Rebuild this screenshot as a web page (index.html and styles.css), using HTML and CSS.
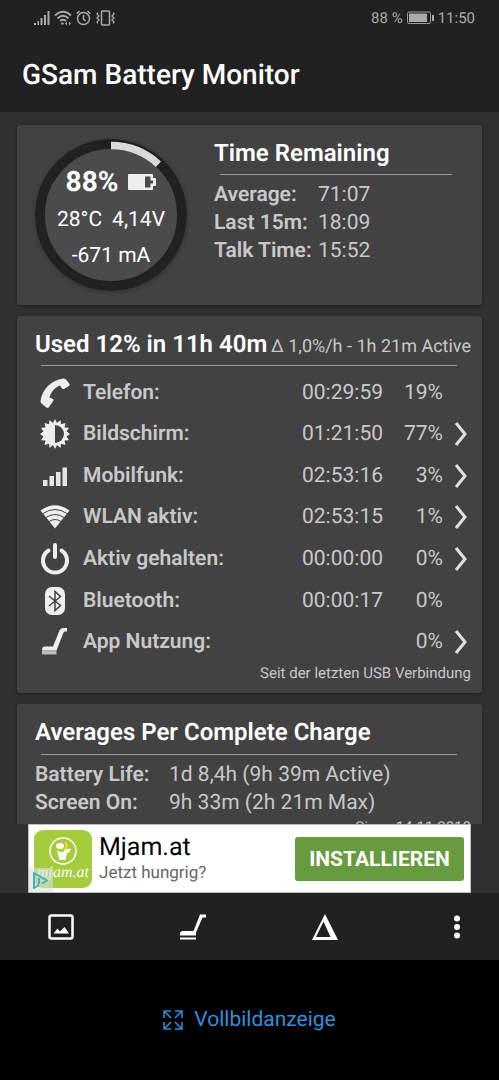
FILE: index.html
```html
<!DOCTYPE html>
<html lang="de">
<head>
  <meta charset="UTF-8">
  <meta name="viewport" content="width=device-width, initial-scale=1.0">
  <title>GSam Battery Monitor</title>
  <link rel="stylesheet" href="styles.css">
</head>
<body>
  <header class="top">
    <div class="statusbar">
      <div class="status-left">
        <svg width="16" height="16" viewBox="0 0 16 16" fill="#aaa"><path d="M0 13h2v2H0zM3.500 11h1.500v4H3.500zM6.500 8h2v7h-2zM10 5h2v10h-2zM13.500 1h2v14h-2z"/></svg>
        <svg width="18" height="16" viewBox="0 0 18 16" fill="none" stroke="#aaa" stroke-width="1.800"><path d="M1 5.500Q9-2 17 5.500M3.500 8.500Q9 3 14.500 8.500M6 11q3-2.500 6 0"/><circle cx="8.500" cy="13.500" r="1.200" fill="#aaa" stroke="none"/><path d="M13 11.500l-2 2 2 2zM15 11.500l2 2-2 2z" fill="#aaa" stroke="none"/></svg>
        <svg width="15" height="16" viewBox="0 0 15 16" fill="none" stroke="#aaa" stroke-width="1.500"><circle cx="7.500" cy="8.500" r="6"/><path d="M7.500 5v4l2 2M.8 3.800L3.500 1M14.200 3.800L11.500 1"/></svg>
        <svg class="vibrate" width="19" height="16" viewBox="0 0 19 16" fill="none" stroke="#aaa" stroke-width="1.500"><rect x="5.500" y="1" width="8" height="14" rx="1"/><path d="M2 2.500l-1 1.500 2 2-2 2 2 2-2 2 1 1.500M17 2.500l1 1.500-2 2 2 2-2 2 2 2-1 1.500" stroke-width="1.300"/></svg>
      </div>
      <div class="status-right">
        <span>88 %</span>
        <svg width="27" height="14" viewBox="0 0 27 14"><rect x=".5" y="1" width="23" height="11.500" rx="1.500" fill="none" stroke="#999"/><rect x="2" y="2.500" width="18" height="8.500" fill="#aaa"/><rect x="25" y="4" width="2" height="6" fill="#aaa"/></svg>
        <span>11:50</span>
      </div>
    </div>
    <h1>GSam Battery Monitor</h1>
  </header>

  <main>
    <section class="card remaining">
      <div class="gauge">
        <svg class="ring" viewBox="0 0 152 152">
          <circle cx="76" cy="76" r="71" fill="#4b4b4b" stroke="#212121" stroke-width="10"/>
          <path d="M76 6.500A69.500 69.500 0 0 1 123.400 25.200" fill="none" stroke="#dadada" stroke-width="7.500"/>
        </svg>
        <div class="gauge-text">
          <div class="level">88%
            <svg width="28" height="18" viewBox="0 0 28 18"><path fill="#eee" fill-rule="evenodd" d="M1 1h23q1 0 1 1v3h2q1 0 1 1v6q0 1-1 1h-2v3q0 1-1 1H1q-1 0-1-1V2q0-1 1-1zM17 3.500v11h5.500v-4H25v-3h-2.500v-4z"/></svg>
          </div>
          <div class="reading"><span>28°C</span><span>4,14V</span></div>
          <div class="reading">-671 mA</div>
        </div>
      </div>
      <div class="estimates">
        <h2>Time Remaining</h2>
        <table class="facts">
          <tr><th scope="row">Average:</th><td>71:07</td></tr>
          <tr><th scope="row">Last 15m:</th><td>18:09</td></tr>
          <tr><th scope="row">Talk Time:</th><td>15:52</td></tr>
        </table>
      </div>
    </section>

    <section class="card usage">
      <div class="usage-head">
        <h2>Used 12% in 11h 40m</h2>
        <span>Δ 1,0%/h - 1h 21m Active</span>
      </div>
      <table class="usage-table">
        <tr>
          <td class="icon"><svg width="32" height="32" viewBox="0 0 32 32"><path fill="#eee" d="M1.500 24C3 12 13 3 24 1.500q2.500-.3 3.500 1.500l3 4q.7 1-.5 2l-5 3q-1.500.5-2-.5l-2-3C15 11 12 15 10.500 20.500l3.500 1.500q1 .7.500 1.500L10 30q-1 1.500-2.500.500L3 27q-1.500-1-1.500-3z"/></svg></td>
          <th scope="row">Telefon:</th><td class="time">00:29:59</td><td class="percent">19%</td><td class="more"></td>
        </tr>
        <tr>
          <td class="icon"><svg width="32" height="32" viewBox="0 0 32 32"><path fill="#eee" d="M16 1l2 4 3.500-3 .5 4.300 4.500-1.300-1 4.500 4.500.2-2.500 3.800L31 16l-3.500 2.500 2.500 3.800-4.500.2 1 4.500-4.500-1.300-.5 4.300-3.500-3-2 4-2-4-3.500 3-.5-4.300L5.500 27l1-4.500-4.500-.2 2.500-3.800L1 16l3.500-2.500L2 9.700l4.500-.2-1-4.500L10 6.300l.5-4.300L14 5z"/><path fill="#424242" d="M16 7a9 9 0 0 1 0 18z"/></svg></td>
          <th scope="row">Bildschirm:</th><td class="time">01:21:50</td><td class="percent">77%</td>
          <td class="more"><button aria-label="Bildschirm Details"><svg width="14" height="24" viewBox="0 0 14 24"><path d="M2 1l9 11-9 11"/></svg></button></td>
        </tr>
        <tr>
          <td class="icon"><svg width="32" height="32" viewBox="0 0 32 32" fill="#e4e4e4"><path d="M4 20h4.500v6H4zM10.500 16H15v10h-4.500zM17 12h4.500v14H17zM23.500 7.500H28V26h-4.500z"/></svg></td>
          <th scope="row">Mobilfunk:</th><td class="time">02:53:16</td><td class="percent">3%</td>
          <td class="more"><button aria-label="Mobilfunk Details"><svg width="14" height="24" viewBox="0 0 14 24"><path d="M2 1l9 11-9 11"/></svg></button></td>
        </tr>
        <tr>
          <td class="icon"><svg width="32" height="32" viewBox="0 0 32 32"><path fill="#eee" d="M16 27.500L1.500 9.500Q16-1 30.500 9.500z"/><path fill="none" stroke="#424242" stroke-width="1" d="M4 12.500q12-8 24 0M7 16.500q9-6 18 0M10 20.500q6-4 12 0"/></svg></td>
          <th scope="row">WLAN aktiv:</th><td class="time">02:53:15</td><td class="percent">1%</td>
          <td class="more"><button aria-label="WLAN Details"><svg width="14" height="24" viewBox="0 0 14 24"><path d="M2 1l9 11-9 11"/></svg></button></td>
        </tr>
        <tr>
          <td class="icon"><svg width="32" height="32" viewBox="0 0 32 32" fill="none" stroke="#eee" stroke-width="4" stroke-linecap="round"><path d="M9.500 7.500a12 12 0 1 0 13 0M16 2v12"/></svg></td>
          <th scope="row">Aktiv gehalten:</th><td class="time">00:00:00</td><td class="percent">0%</td>
          <td class="more"><button aria-label="Aktiv gehalten Details"><svg width="14" height="24" viewBox="0 0 14 24"><path d="M2 1l9 11-9 11"/></svg></button></td>
        </tr>
        <tr>
          <td class="icon"><svg width="32" height="32" viewBox="0 0 32 32"><rect x="6" y="2" width="20" height="28" rx="7" fill="#eee"/><path fill="none" stroke="#424242" stroke-width="1.500" d="M10 11l11.500 9.500L16 25.500v-19l5.500 5L10 21"/></svg></td>
          <th scope="row">Bluetooth:</th><td class="time">00:00:17</td><td class="percent">0%</td><td class="more"></td>
        </tr>
        <tr>
          <td class="icon"><svg width="32" height="32" viewBox="0 0 32 32"><path fill="#eee" d="M28 2h-4q-2.500 0-3.500 2.500l-6.500 16H6q-3 0-3 4h14.500L24.500 6.500q.4-1 1.500-1h2z"/><path fill="#bbb" d="M3 24.500h14.500v4H3z"/></svg></td>
          <th scope="row">App Nutzung:</th><td class="time"></td><td class="percent">0%</td>
          <td class="more"><button aria-label="App Nutzung Details"><svg width="14" height="24" viewBox="0 0 14 24"><path d="M2 1l9 11-9 11"/></svg></button></td>
        </tr>
      </table>
      <p class="note">Seit der letzten USB Verbindung</p>
    </section>

    <section class="card averages">
      <h2>Averages Per Complete Charge</h2>
      <table class="facts">
        <tr><th scope="row">Battery Life:</th><td>1d 8,4h (9h 39m Active)</td></tr>
        <tr><th scope="row">Screen On:</th><td>9h 33m (2h 21m Max)</td></tr>
      </table>
      <p class="note">Since 14.11.2018</p>
    </section>
  </main>

  <aside class="ad">
    <svg class="ad-logo" width="58" height="58" viewBox="0 0 58 58">
      <rect width="58" height="58" rx="9" fill="#a4cc3c"/>
      <circle cx="29" cy="21" r="13" fill="none" stroke="#fff" stroke-width="1.500"/>
      <path fill="#fff" d="M23 20q4 3 6 2 3-4 8-3-1 3-4 4l-1.500 7h-6z"/>
      <ellipse cx="26" cy="16" rx="4" ry="3" fill="#fff"/>
      <path d="M30 20q5-4 1-8" fill="none" stroke="#f0df3c" stroke-width="2"/>
      <text x="29" y="47" text-anchor="middle">mjam.at</text>
    </svg>
    <svg class="ad-choices" width="24" height="24" viewBox="0 0 24 24">
      <rect width="24" height="24" fill="#ddd" fill-opacity=".6"/>
      <path d="M10 17l-5 3V5l13 7.500-5 3M10 10v6" fill="none" stroke="#3bb0c9" stroke-width="2" stroke-linejoin="round"/>
    </svg>
    <div class="ad-text">
      <strong>Mjam.at</strong>
      <span>Jetzt hungrig?</span>
    </div>
    <button class="install">INSTALLIEREN</button>
  </aside>

  <nav>
    <button aria-label="Diagramm"><svg width="26" height="26" viewBox="0 0 26 26"><rect x="1.500" y="1.500" width="23" height="23" rx="2" fill="none" stroke="#fff" stroke-width="2.500"/><path fill="#fff" d="M5.500 19.500l4-5 2.500 3 4.500-4.500 4.500 6.500z"/></svg></button>
    <button aria-label="App Nutzung"><svg width="26" height="26" viewBox="0 0 26 26" fill="#fff"><path d="M20 .5h6v3h-3.500L16 18.500v3H0V20q0-3 3-3h10.500zM0 23.500h16v2H0z"/></svg></button>
    <button aria-label="Delta"><svg width="26" height="26" viewBox="0 0 26 26"><path fill="#fff" fill-rule="evenodd" d="M13 0l13 26H0zM11.500 7.500L4 23h14.500z"/></svg></button>
    <button aria-label="Mehr"><svg width="26" height="26" viewBox="0 0 26 26" fill="#fff"><circle cx="13" cy="4.500" r="3"/><circle cx="13" cy="13" r="3"/><circle cx="13" cy="21.500" r="3"/></svg></button>
  </nav>

  <footer>
    <a href="#">
      <svg width="20" height="20" viewBox="0 0 20 20" fill="none" stroke="#2f8fdb" stroke-width="1.500"><path d="M1 8V1h7M12 1h7v7M19 12v7h-7M8 19H1v-7M2 2l6 6M18 2l-6 6M18 18l-6-6M2 18l6-6"/></svg>
      Vollbildanzeige
    </a>
  </footer>
</body>
</html>
```
FILE: styles.css
```css
* {
  box-sizing: border-box;
}
body {
  margin: 0;
  height: 100vh;
  display: flex;
  flex-direction: column;
  font-family: Roboto, sans-serif;
  font-size: 21px;
  text-rendering: geometricPrecision;
  color: #c8c8c8;
  background: #303030;
}
h1, h2, p {
  margin: 0;
}
svg {
  display: block;
  flex: none;
}
button {
  font: inherit;
  border: 0;
  padding: 0;
  background: none;
  cursor: pointer;
}

/* header */
.top {
  background: #212121;
  height: 112px;
  flex: none;
}
.statusbar {
  display: flex;
  justify-content: space-between;
  height: 36px;
  padding: 0 24px 0 34px;
  font-size: 15px;
  color: #aaa;
}
.status-left, .status-right {
  display: flex;
  align-items: center;
  gap: 4px;
}
.vibrate {
  margin-left: 1px;
}
h1 {
  padding: 0 22px;
  font-size: 28px;
  line-height: 78px;
  font-weight: 500;
  color: #fff;
}

/* cards */
main {
  flex: 1;
  min-height: 0;
  overflow: hidden;
  padding: 13px 17px 0;
}
.card {
  padding: 13px 11px 0 18px;
  margin-bottom: 11px;
  background: #424242;
  border-radius: 3px;
  box-shadow: 0 1px 3px rgba(0, 0, 0, 0.4);
}
h2 {
  font-size: 24px;
  line-height: 30px;
  font-weight: 600;
  color: #fff;
}
th {
  padding: 0;
  text-align: left;
  font-weight: 600;
}
td {
  padding: 0;
}
table {
  border-spacing: 0;
}
.facts {
  width: 100%;
  padding-top: 7px;
  line-height: 28px;
}

/* time remaining */
.remaining {
  display: flex;
  gap: 27px;
  height: 180px;
  padding-right: 30px;
}
.gauge {
  display: grid;
  width: 152px;
  height: 152px;
  flex: none;
  margin-top: 1px;
}
.ring, .gauge-text {
  grid-area: 1 / 1;
}
.ring {
  border-radius: 50%;
  box-shadow: 0 1px 4px rgba(0, 0, 0, 0.3);
}
.gauge-text {
  padding-top: 23px;
  color: #fff;
}
.level, .reading {
  display: flex;
  justify-content: center;
  align-items: center;
  gap: 10px;
  line-height: 36px;
}
.level {
  font-size: 28px;
  line-height: 40px;
  font-weight: 700;
}
.estimates {
  flex: 1;
}
.estimates h2 {
  padding-bottom: 6px;
}
.estimates .facts {
  background: linear-gradient(#999, #999) 6px 0 / 100% 1px no-repeat;
}
.estimates th {
  width: 104px;
}

/* usage */
.usage {
  height: 377px;
}
.usage-head {
  display: flex;
  justify-content: space-between;
  align-items: baseline;
  padding-bottom: 6px;
}
.usage-head span {
  font-size: 18px;
  white-space: nowrap;
}
.usage-table {
  width: 100%;
  height: 298px;
  padding-top: 7px;
  background: linear-gradient(#999, #999) 6px 0 / 416px 1px no-repeat;
}
.icon {
  width: 48px;
  padding-left: 4px;
}
.time, .percent {
  text-align: right;
}
.percent {
  width: 60px;
}
.more {
  width: 28px;
}
.more button {
  display: block;
  margin-left: 11px;
}
.more path {
  fill: none;
  stroke: #e0e0e0;
  stroke-width: 3;
}
.note {
  font-size: 15px;
  line-height: 20px;
  text-align: right;
}

/* averages */
.averages h2 {
  padding-bottom: 7px;
}
.averages .facts {
  background: linear-gradient(#999, #999) 6px 0 / 416px 1px no-repeat;
}
.averages th {
  width: 134px;
}

/* ad banner */
.ad {
  position: relative;
  display: flex;
  align-items: center;
  height: 69px;
  flex: none;
  margin: 0 28px;
  padding: 0 6px 0 5px;
  background: #fff;
  border: 1px solid #bbb;
}
.ad-logo text {
  font: italic 16px "Liberation Serif", serif;
  fill: #fff;
}
.ad-choices {
  position: absolute;
  left: 0;
  bottom: 0;
}
.ad-text {
  flex: 1;
  margin-left: 7px;
}
.ad-text strong, .ad-text span {
  display: block;
}
.ad-text strong {
  font-size: 25px;
  line-height: 28px;
  font-weight: 400;
  color: #000;
}
.ad-text span {
  font-size: 17px;
  line-height: 22px;
  color: #666;
}
.install {
  width: 169px;
  height: 44px;
  border-radius: 3px;
  background: #689a3f;
  color: #fff;
  font-size: 21px;
  font-weight: 700;
}

/* bottom bars */
nav {
  display: flex;
  justify-content: space-between;
  height: 67px;
  flex: none;
  padding: 0 9px 0 28px;
  background: #212121;
}
nav button {
  display: flex;
  justify-content: center;
  align-items: center;
  width: 66px;
}
footer {
  display: flex;
  justify-content: center;
  align-items: center;
  height: 120px;
  flex: none;
  background: #000;
}
footer a {
  display: flex;
  align-items: center;
  gap: 11px;
  font-size: 21px;
  color: #2f8fdb;
  text-decoration: none;
}
```
